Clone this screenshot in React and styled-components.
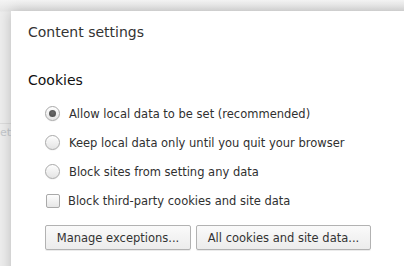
import React from "react";
import styled, { createGlobalStyle } from "styled-components";

const Global = createGlobalStyle`
  html, body { margin: 0; padding: 0; }
  body {
    width: 404px;
    height: 266px;
    overflow: hidden;
    background: linear-gradient(to bottom, #f4f4f4 0px, #e6e6e6 11px, #ededed 12px, #ededed 100%);
    font-family: "DejaVu Sans", "Liberation Sans", sans-serif;
  }
`;

const Stage = styled.div`
  position: relative;
  width: 404px;
  height: 266px;
  overflow: hidden;
`;

const BackdropText = styled.div`
  position: absolute;
  left: 0;
  top: 123px;
  width: 30px;
  height: 14px;
  border-top: 1px solid #dcdcdc;
  color: #c4c8cc;
  font-size: 11px;
  line-height: 14px;
  padding-top: 2px;
  white-space: nowrap;
`;

const Dialog = styled.div`
  position: absolute;
  left: 11px;
  top: 11px;
  width: 420px;
  height: 280px;
  background: #fff;
  box-shadow: 0 0 12px rgba(0, 0, 0, 0.22);
  padding: 12px 0 0 17px;
  box-sizing: border-box;
  color: #333;
`;

const Title = styled.h1`
  margin: 0;
  font-size: 14px;
  font-weight: normal;
  line-height: 18px;
  color: #333;
`;

const Section = styled.section`
  margin-top: 30px;
`;

const SectionTitle = styled.h2`
  margin: 0;
  font-size: 14px;
  font-weight: normal;
  line-height: 18px;
  color: #111;
`;

const Options = styled.div`
  margin-top: 10px;
  padding-left: 17px;
  display: flex;
  flex-direction: column;
`;

const Option = styled.label`
  display: flex;
  align-items: center;
  height: 29px;
  gap: ${(p) => (p.$check ? "8px" : "9px")};
  font-size: 11.5px;
  color: #303030;
`;

const Radio = styled.span`
  width: 13px;
  height: 13px;
  border-radius: 50%;
  border: 1px solid #a9a9a9;
  background: linear-gradient(#fdfdfd, #e4e4e4);
  box-shadow: inset 0 1px 1px rgba(255,255,255,0.8), 0 0.5px 1px rgba(0,0,0,0.08);
  display: flex;
  align-items: center;
  justify-content: center;
  flex: none;
  &::after {
    content: "";
    display: ${(p) => (p.$checked ? "block" : "none")};
    width: 7px;
    height: 7px;
    border-radius: 50%;
    background: radial-gradient(circle at 50% 40%, #6a6a6a, #4a4a4a);
  }
`;

const Check = styled.span`
  width: 12px;
  height: 12px;
  border-radius: 2px;
  border: 1px solid #a9a9a9;
  background: linear-gradient(#fdfdfd, #e6e6e6);
  flex: none;
  margin-left: 1px;
`;

const Buttons = styled.div`
  display: flex;
  gap: 5px;
  margin-top: 10px;
`;

const Button = styled.button`
  width: ${(p) => p.$w}px;
  height: 25px;
  margin: 0;
  padding: 0;
  text-align: center;
  font-family: inherit;
  font-size: 11.5px;
  color: #333;
  border: 1px solid #b2b2b2;
  border-radius: 2px;
  background: linear-gradient(#fafafa, #ececec);
  box-shadow: 0 1px 0 rgba(0,0,0,0.08);
  flex: none;
`;

export default function App() {
  return (
    <Stage>
      <Global />
      <BackdropText>ett</BackdropText>
      <Dialog>
        <Title>Content settings</Title>
        <Section>
          <SectionTitle>Cookies</SectionTitle>
          <Options>
            <Option><Radio $checked />Allow local data to be set (recommended)</Option>
            <Option><Radio />Keep local data only until you quit your browser</Option>
            <Option><Radio />Block sites from setting any data</Option>
            <Option $check><Check />Block third-party cookies and site data</Option>
            <Buttons>
              <Button $w={146}>Manage exceptions...</Button>
              <Button $w={175}>All cookies and site data...</Button>
            </Buttons>
          </Options>
        </Section>
      </Dialog>
    </Stage>
  );
}
